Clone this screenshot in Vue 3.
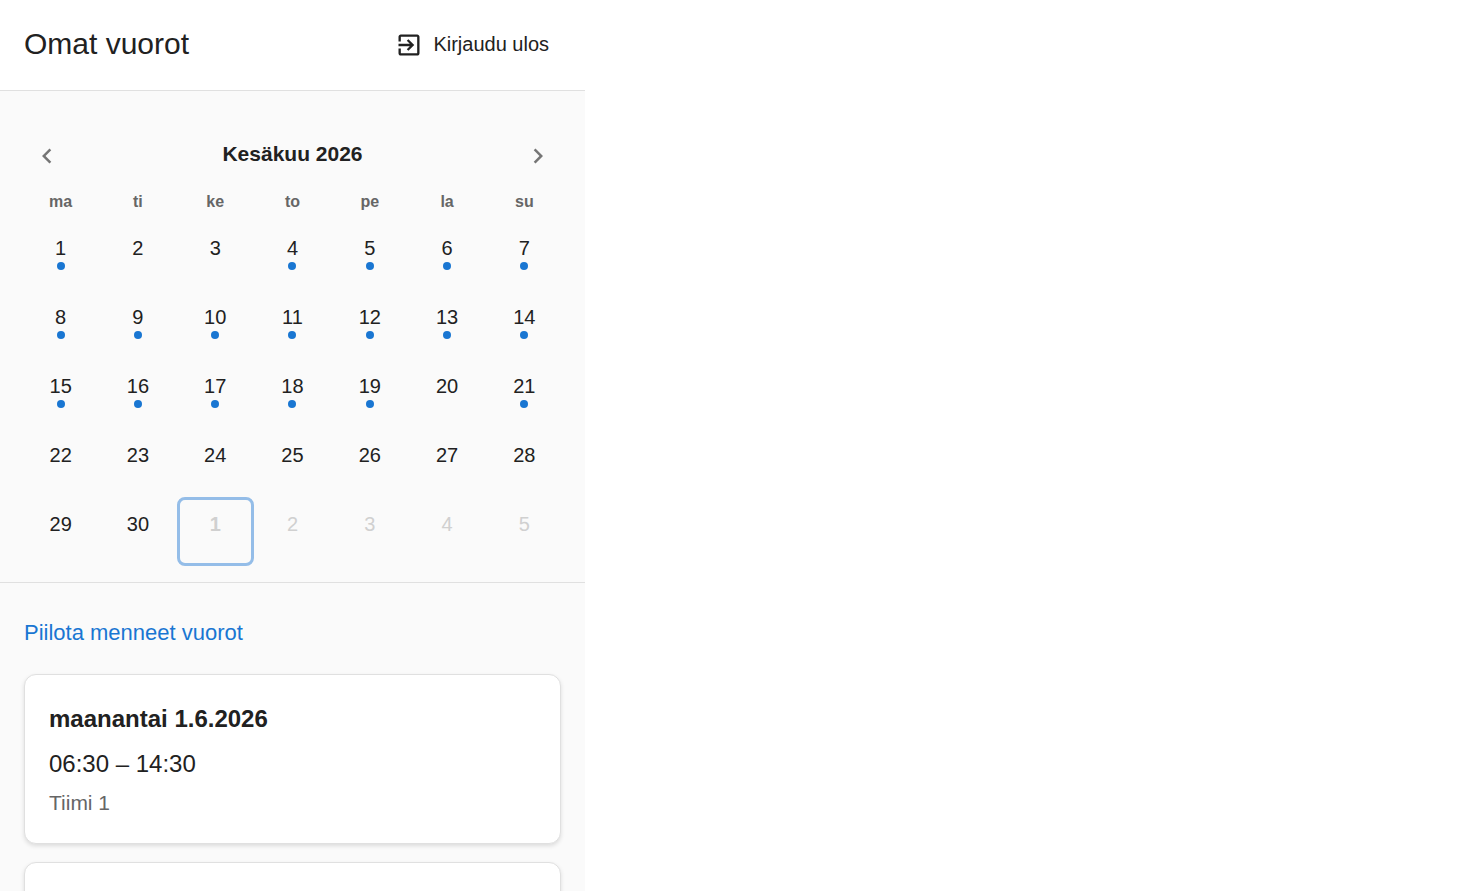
<script setup>
import { ref } from 'vue'

const weekdays = ['ma', 'ti', 'ke', 'to', 'pe', 'la', 'su']
const shiftDays = new Set([1, 4, 5, 6, 7, 8, 9, 10, 11, 12, 13, 14, 15, 16, 17, 18, 19, 21])

const days = []
for (let d = 1; d <= 30; d++) {
  days.push({ key: `6-${d}`, label: d, shift: shiftDays.has(d), outside: false, today: false })
}
for (let d = 1; d <= 5; d++) {
  days.push({ key: `7-${d}`, label: d, shift: false, outside: true, today: d === 1 })
}
const weeks = []
for (let i = 0; i < days.length; i += 7) weeks.push(days.slice(i, i + 7))

const shifts = ref([
  { id: 1, date: 'maanantai 1.6.2026', time: '06:30 – 14:30', team: 'Tiimi 1' },
  { id: 2 }
])
</script>

<template>
  <div class="app">
    <header class="topbar">
      <h1>Omat vuorot</h1>
      <button type="button" class="logout">
        <svg viewBox="0 0 24 24" aria-hidden="true">
          <path d="M10.09 15.59L11.5 17l5-5-5-5-1.41 1.41L12.67 11H3v2h9.67l-2.58 2.59zM19 3H5c-1.11 0-2 .9-2 2v4h2V5h14v14H5v-4H3v4c0 1.1.89 2 2 2h14c1.1 0 2-.9 2-2V5c0-1.1-.9-2-2-2z" />
        </svg>
        <span>Kirjaudu ulos</span>
      </button>
    </header>

    <section class="calendar">
      <div class="month">
        <button type="button" class="nav" aria-label="Edellinen kuukausi">
          <svg viewBox="0 0 24 24" aria-hidden="true"><path d="M15.41 7.41L14 6l-6 6 6 6 1.41-1.41L10.83 12z" /></svg>
        </button>
        <h2>Kesäkuu 2026</h2>
        <button type="button" class="nav" aria-label="Seuraava kuukausi">
          <svg viewBox="0 0 24 24" aria-hidden="true"><path d="M10 6L8.59 7.41 13.17 12l-4.58 4.59L10 18l6-6z" /></svg>
        </button>
      </div>
      <table class="grid">
        <thead>
          <tr>
            <th v-for="w in weekdays" :key="w" scope="col">{{ w }}</th>
          </tr>
        </thead>
        <tbody>
          <tr v-for="(week, i) in weeks" :key="i">
            <td v-for="d in week" :key="d.key">
              <button type="button" class="day" :class="{ outside: d.outside, today: d.today }">
                <span class="number">{{ d.label }}</span>
                <span v-if="d.shift" class="dot"></span>
              </button>
            </td>
          </tr>
        </tbody>
      </table>
    </section>

    <main class="shifts">
      <button type="button" class="toggle">Piilota menneet vuorot</button>
      <ul class="list">
        <li v-for="s in shifts" :key="s.id" class="card">
          <template v-if="s.date">
            <h3>{{ s.date }}</h3>
            <p class="time">{{ s.time }}</p>
            <p class="team">{{ s.team }}</p>
          </template>
        </li>
      </ul>
    </main>
  </div>
</template>

<style>
body {
  margin: 0;
  background: #fff;
}
</style>

<style scoped>
.app {
  box-sizing: border-box;
  display: flex;
  flex-direction: column;
  width: 100%;
  max-width: 585px;
  height: 100vh;
  overflow: hidden;
  background: #fafafa;
  color: #212121;
  font-family: "Liberation Sans", Arial, sans-serif;
}

h1, h2, h3, p, ul {
  margin: 0;
  padding: 0;
}

button {
  margin: 0;
  padding: 0;
  border: 0;
  background: none;
  color: inherit;
  font-family: inherit;
  cursor: pointer;
}

svg {
  display: block;
  fill: currentColor;
}

.topbar {
  display: flex;
  flex: none;
  align-items: center;
  justify-content: space-between;
  padding: 24px 32px 24px 24px;
  border-bottom: 1px solid #e0e0e0;
  background: #fff;
}

h1 {
  padding-bottom: 2px;
  font-size: 30px;
  font-weight: 400;
  line-height: 40px;
}

.logout {
  display: flex;
  align-items: center;
  gap: 10px;
  padding-right: 4px;
  font-size: 20px;
  line-height: 28px;
}

.logout span {
  padding-bottom: 2px;
}

.logout svg {
  width: 28px;
  height: 28px;
}

.calendar {
  flex: none;
  padding: 50px 22px 16px;
  border-bottom: 1px solid #e0e0e0;
}

.month {
  display: flex;
  align-items: flex-start;
  justify-content: space-between;
  margin-bottom: 21px;
  padding: 0 10px;
}

h2 {
  font-size: 21px;
  font-weight: 700;
  line-height: 26px;
}

.nav {
  color: #757575;
}

.nav svg {
  width: 30px;
  height: 30px;
}

.grid {
  width: 100%;
  border-collapse: collapse;
  table-layout: fixed;
}

th {
  padding: 0 0 9px;
  color: #666;
  font-size: 16px;
  font-weight: 700;
  line-height: 20px;
}

td {
  padding: 0;
}

.day {
  box-sizing: border-box;
  display: flex;
  flex-direction: column;
  align-items: center;
  gap: 1px;
  width: 100%;
  height: 69px;
  padding-top: 14px;
  border-radius: 8px;
  font-size: 20px;
  line-height: 26px;
}

.dot {
  width: 8px;
  height: 8px;
  border-radius: 50%;
  background: #1976d2;
}

.outside {
  color: #d0d0d0;
}

.today {
  padding-top: 11px;
  border: 3px solid #94bde8;
  font-weight: 700;
}

.shifts {
  flex: 1;
  min-height: 0;
  padding: 36px 24px 0;
  overflow-y: auto;
  scrollbar-width: none;
}

.toggle {
  display: block;
  margin-bottom: 27px;
  color: #1976d2;
  font-size: 22px;
  line-height: 28px;
}

.list {
  display: flex;
  flex-direction: column;
  gap: 18px;
  list-style: none;
}

.card {
  box-sizing: border-box;
  min-height: 170px;
  padding: 26px 24px 25px;
  border: 1px solid #e0e0e0;
  border-radius: 12px;
  background: #fff;
  box-shadow: 0 2px 4px rgba(0, 0, 0, 0.12);
}

h3 {
  margin-bottom: 9px;
  font-size: 24px;
  font-weight: 700;
  line-height: 36px;
}

.time {
  margin-bottom: 6px;
  font-size: 24px;
  line-height: 36px;
}

.team {
  color: #666;
  font-size: 21px;
  line-height: 30px;
}
</style>
